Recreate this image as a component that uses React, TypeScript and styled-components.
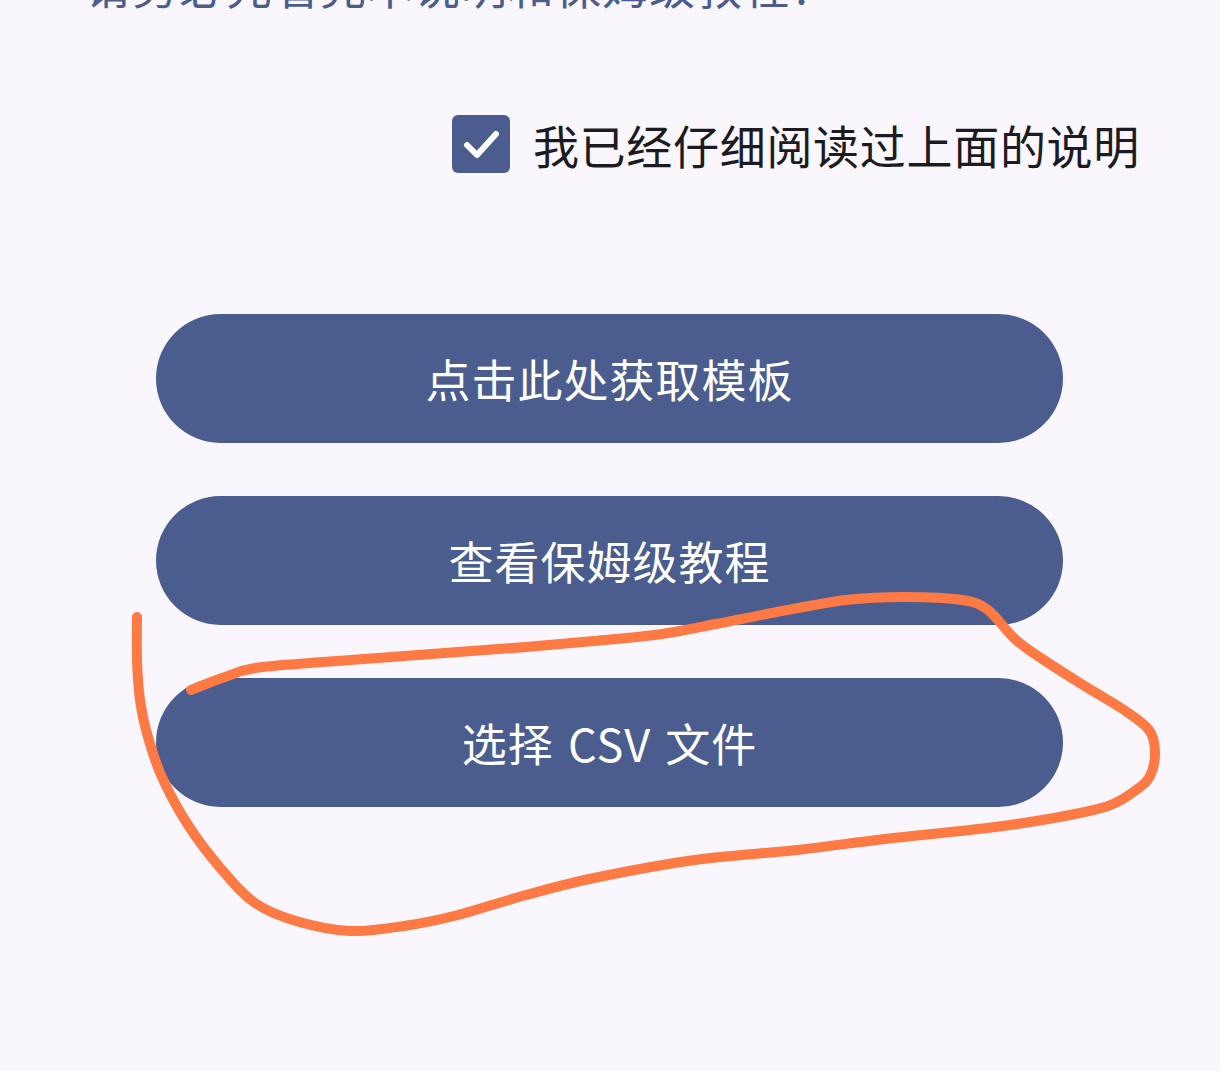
import styled, { createGlobalStyle } from 'styled-components';

const GlobalStyle = createGlobalStyle`
  html, body {
    margin: 0;
    padding: 0;
    background: #f9f7fd;
  }
  body {
    font-family: "Noto Sans CJK SC", "Noto Sans", Roboto, sans-serif;
  }
`;

const actions = ['点击此处获取模板', '查看保姆级教程', '选择 CSV 文件'];

// hand-drawn marker loop around the last button
const scribble = [
  [137, 617], [137, 660], [140, 700], [146, 730], [161, 775], [188, 825],
  [222, 870], [255, 903], [296, 921], [350, 931], [404, 926], [458, 915],
  [526, 895], [594, 878], [695, 860], [797, 850], [885, 839], [987, 828],
  [1054, 818], [1108, 806], [1136, 790], [1150, 776], [1155, 752],
  [1149, 730], [1124, 710], [1088, 688], [1050, 664], [1016, 640],
  [988, 610], [962, 600], [905, 597], [846, 600], [777, 612], [716, 624],
  [662, 634], [594, 641], [526, 647], [458, 652], [391, 657], [323, 662],
  [255, 668], [222, 678], [191, 690],
];

// catmull-rom -> cubic bezier so the marker line looks hand drawn
const smoothPath = (pts: number[][]) => {
  let d = `M${pts[0][0]},${pts[0][1]}`;
  for (let i = 0; i < pts.length - 1; i++) {
    const p0 = pts[i - 1] || pts[i];
    const p1 = pts[i];
    const p2 = pts[i + 1];
    const p3 = pts[i + 2] || p2;
    const c1x = p1[0] + (p2[0] - p0[0]) / 6;
    const c1y = p1[1] + (p2[1] - p0[1]) / 6;
    const c2x = p2[0] - (p3[0] - p1[0]) / 6;
    const c2y = p2[1] - (p3[1] - p1[1]) / 6;
    d += ` C${c1x},${c1y} ${c2x},${c2y} ${p2[0]},${p2[1]}`;
  }
  return d;
};

export default function App() {
  return (
    <StyledPage>
      <GlobalStyle />
      <Notice>请务必先看完本说明和保姆级教程！</Notice>

      <CheckRow>
        <CheckBox>
          <svg width="58" height="58" viewBox="0 0 58 58">
            <path
              d="M15 30 L25 40 L44 19"
              fill="none"
              stroke="#fff"
              strokeWidth="6"
              strokeLinecap="round"
              strokeLinejoin="round"
            />
          </svg>
        </CheckBox>
        <CheckLabel>我已经仔细阅读过上面的说明</CheckLabel>
      </CheckRow>

      <Actions>
        {actions.map((label) => (
          <PillButton key={label}>{label}</PillButton>
        ))}
      </Actions>

      <Marker width="1220" height="1071" viewBox="0 0 1220 1071">
        <path
          d={smoothPath(scribble)}
          fill="none"
          stroke="#fe7a45"
          strokeWidth="10"
          strokeLinecap="round"
          strokeLinejoin="round"
        />
      </Marker>
    </StyledPage>
  );
}

const StyledPage = styled.div`
  position: relative;
  width: 1220px;
  height: 1071px;
  overflow: hidden;
  background: #f9f7fd;
`;

const Notice = styled.p`
  margin: -46px 0 0 85px;
  font-size: 46px;
  line-height: 60px;
  letter-spacing: 1px;
  color: #4a5d8e;
  white-space: nowrap;
`;

const CheckRow = styled.label`
  display: flex;
  align-items: center;
  justify-content: flex-end;
  gap: 23px;
  margin-top: 101px;
  padding-right: 80px;
`;

const CheckBox = styled.span`
  display: flex;
  width: 58px;
  height: 58px;
  border-radius: 6px;
  background: #4a5d8e;
`;

const CheckLabel = styled.span`
  font-size: 46px;
  line-height: 58px;
  letter-spacing: 0.7px;
  color: #1d1b20;
`;

const Actions = styled.div`
  display: flex;
  flex-direction: column;
  gap: 53px;
  margin: 141px 157px 0 156px;
`;

const PillButton = styled.button`
  height: 129px;
  border: none;
  border-radius: 65px;
  background: #4a5d8e;
  color: #fff;
  font-family: inherit;
  font-size: 45px;
  letter-spacing: 1px;
  word-spacing: 3px;
  cursor: pointer;
`;

const Marker = styled.svg`
  position: absolute;
  left: 0;
  top: 0;
  pointer-events: none;
`;
